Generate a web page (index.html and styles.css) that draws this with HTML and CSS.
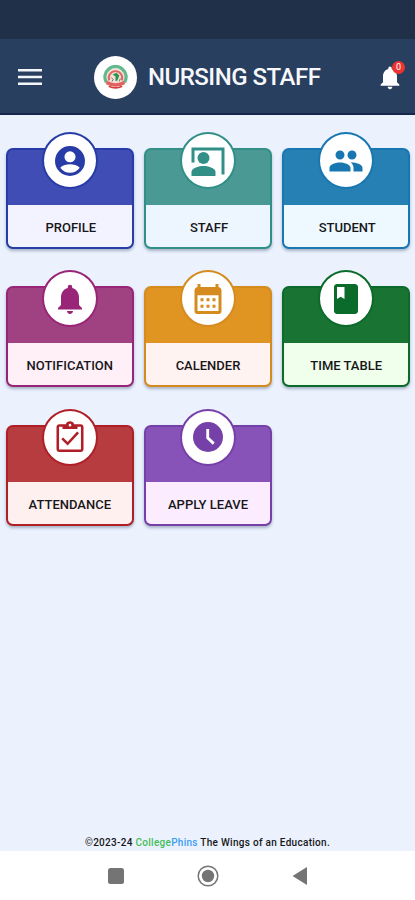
FILE: index.html
```html
<!DOCTYPE html>
<html lang="en">
	<head>
		<meta charset="utf-8">
		<title>Nursing Staff</title>
		<meta name="theme-color" content="#203047">
		<meta name="viewport" content="width=device-width, initial-scale=1">
		<link rel="stylesheet" href="styles.css">
	</head>
	<body>
		<div class="statusbar"></div>
		<header class="topbar">
			<svg class="menu" viewBox="0 0 24 16"><path d="M0 0h24v2.6H0zM0 6.7h24v2.6H0zM0 13.4h24V16H0z"/></svg>
			<div class="logo">
				<svg viewBox="0 0 26 26">
					<circle cx="13" cy="12.5" r="9.5" fill="#f7ded9"/>
					<path d="M3.5 18A11 11 0 1 1 22.5 18" fill="none" stroke="#62b98b" stroke-width="3.4"/>
					<path d="M6.5 16A7 7 0 1 1 19.5 16" fill="none" stroke="#e16763" stroke-width="2"/>
					<path d="M4 16.5q9 5 18 0l1 3.5q-10 5-20 0z" fill="#df625e"/>
					<path d="M6 22q7 3.5 14 0" fill="none" stroke="#d63c3c" stroke-width="1.8"/>
					<path d="M10 10l4-2 3 3-2 5-2 1v-5z" fill="#299650"/>
					<path d="M8.5 13l2 2-1 2M18 14l-1 3" fill="none" stroke="#4b756c"/>
				</svg>
			</div>
			<h1>NURSING STAFF</h1>
			<div class="alerts">
				<svg viewBox="0 0 24 24"><path d="M12 22c1.1 0 2-.9 2-2h-4c0 1.100.9 2 2 2zm6-6v-5c0-3.070-1.640-5.640-4.500-6.320V4a1.500 1.500 0 0 0-3 0v.68C7.630 5.360 6 7.920 6 11v5l-2 2v1h16v-1z"/></svg>
				<span class="badge">0</span>
			</div>
		</header>
		<main class="grid">
			<a class="card profile">
				<span class="icon"><svg viewBox="0 0 24 24"><circle cx="12" cy="12" r="10"/><circle class="cut" cx="12" cy="9.200" r="3.700"/><path class="cut" d="M5.500 16.500C7 14.800 10 14.200 12 14.200s5 .6 6.500 2.300C17 18.600 14.700 19.900 12 19.900s-5-1.300-6.500-3.400z"/></svg></span>
				<span class="label">PROFILE</span>
			</a>
			<a class="card staff">
				<span class="icon"><svg viewBox="0 0 24 24"><path d="M1 13V3h22v18h-2V5H3v8z"/><circle cx="9" cy="10" r="4"/><path d="M1 22v-2.800C1 16.500 6.300 15.300 9 15.300s8 1.200 8 3.900V22z"/></svg></span>
				<span class="label">STAFF</span>
			</a>
			<a class="card student">
				<span class="icon"><svg viewBox="0 0 24 24"><path d="M16 11c1.660 0 2.990-1.340 2.990-3S17.660 5 16 5s-3 1.340-3 3 1.340 3 3 3zm-8 0c1.660 0 2.990-1.340 2.990-3S9.660 5 8 5 5 6.340 5 8s1.340 3 3 3zm0 2c-2.330 0-7 1.170-7 3.500V19h14v-2.500C15 14.170 10.330 13 8 13zm8 0c-.29 0-.62.020-.97.050 1.160.84 1.970 1.970 1.970 3.450V19h6v-2.500c0-2.330-4.670-3.500-7-3.500z"/></svg></span>
				<span class="label">STUDENT</span>
			</a>
			<a class="card notification">
				<span class="icon"><svg viewBox="0 0 24 24"><path d="M12 22c1.100 0 2-.9 2-2h-4c0 1.100.9 2 2 2zm6-6v-5c0-3.070-1.640-5.640-4.500-6.320V4a1.500 1.500 0 0 0-3 0v.68C7.630 5.360 6 7.920 6 11v5l-2 2v1h16v-1z"/></svg></span>
				<span class="label">NOTIFICATION</span>
			</a>
			<a class="card calender">
				<span class="icon"><svg viewBox="0 0 24 24"><path fill-rule="evenodd" d="M5 2h2v2h10V2h2v2a2.300 2.300 0 0 1 2 2v14a2 2 0 0 1-2 2H5a2 2 0 0 1-2-2V6a2.300 2.300 0 0 1 2-2zm0 7.500V20h14V9.500z"/><path d="M7 11.500h2v2H7zM11 11.500h2v2h-2zM15 11.500h2v2h-2zM7 15.800h2v2H7zM11 15.800h2v2h-2zM15 15.800h2v2h-2z"/></svg></span>
				<span class="label">CALENDER</span>
			</a>
			<a class="card timetable">
				<span class="icon"><svg viewBox="0 0 24 24"><path d="M18 2H6c-1.100 0-2 .9-2 2v16c0 1.100.9 2 2 2h12c1.100 0 2-.9 2-2V4c0-1.100-.9-2-2-2zM6 4h5v8l-2.500-1.500L6 12V4z"/></svg></span>
				<span class="label">TIME TABLE</span>
			</a>
			<a class="card attendance">
				<span class="icon"><svg viewBox="0 0 24 24"><path fill-rule="evenodd" d="M5 3.500h4.200a3 3 0 0 1 5.600 0H19a2 2 0 0 1 2 2V20a2 2 0 0 1-2 2H5a2 2 0 0 1-2-2V5.500a2 2 0 0 1 2-2zm-.3 1.700v15.100h14.600V5.200H17v1.500H7V5.200zm7.300-2a.9.9 0 1 0 0 1.800.9.9 0 0 0 0-1.800z"/><path d="M6.800 12.900l3.600 3.600 7-7.600" class="stroke"/></svg></span>
				<span class="label">ATTENDANCE</span>
			</a>
			<a class="card leave">
				<span class="icon"><svg viewBox="0 0 24 24"><circle cx="12" cy="12" r="10"/><path d="M11.800 6.600v6l4 3.800" class="stroke cutline"/></svg></span>
				<span class="label">APPLY LEAVE</span>
			</a>
		</main>
		<footer class="credit">©2023-24 <b class="green">College</b><b class="blue">Phins</b> The Wings of an Education.</footer>
		<nav class="navbar">
			<svg viewBox="0 0 24 24"><rect x="4" y="4" width="16" height="16" rx="2.500"/></svg>
			<svg viewBox="0 0 24 24"><circle cx="12" cy="12" r="9.800" class="ring"/><circle cx="12" cy="12" r="6.200"/></svg>
			<svg viewBox="0 0 24 24"><path d="M4.500 12L19 3v18z"/></svg>
		</nav>
	</body>
</html>
```
FILE: styles.css
```css
html, body {
	margin: 0;
	padding: 0;
	height: 100%;
}
body {
	display: flex;
	flex-direction: column;
	background: #ebf2fe;
	font-family: Roboto, sans-serif;
	color: #171719;
	overflow: hidden;
}
svg {
	display: block;
}
.statusbar {
	height: 39px;
	background: #203048;
}
.topbar {
	display: flex;
	align-items: center;
	box-sizing: border-box;
	height: 76px;
	padding: 2px 11px 0 18px;
	background: #293f60;
	border-bottom: 2px solid #14264b;
}
.menu {
	width: 24px;
	height: 16px;
	fill: #f4f6fa;
}
.logo {
	display: flex;
	align-items: center;
	justify-content: center;
	width: 43px;
	height: 43px;
	margin-left: 52px;
	border-radius: 50%;
	background: #fff;
}
.logo svg {
	width: 25px;
	height: 25px;
}
h1 {
	margin: 0 0 0 11px;
	font-size: 24px;
	font-weight: 500;
	letter-spacing: -.5px;
	color: #f7f8fb;
	white-space: nowrap;
}
.alerts {
	position: relative;
	margin-left: auto;
}
.alerts svg {
	width: 28px;
	height: 31px;
	fill: #fff;
}
.badge {
	position: absolute;
	top: -1px;
	right: -1px;
	width: 13px;
	height: 13px;
	border-radius: 50%;
	background: #ec3530;
	color: #fff;
	font-size: 9px;
	line-height: 13px;
	text-align: center;
}
.grid {
	flex: 1;
	display: grid;
	grid-template-columns: repeat(3, 128px);
	grid-auto-rows: 101px;
	gap: 37.3px 10.2px;
	padding: 33px 0 0 5.8px;
}
.card {
	position: relative;
	display: flex;
	flex-direction: column;
	justify-content: flex-end;
	box-sizing: border-box;
	border: 2px solid var(--edge);
	border-radius: 7px;
	background: var(--main);
	box-shadow: 0 2px 3px rgba(40, 60, 90, .35);
}
.icon {
	position: absolute;
	top: -18px;
	left: 50%;
	display: flex;
	align-items: center;
	justify-content: center;
	box-sizing: border-box;
	width: 56px;
	height: 57px;
	margin-left: -28px;
	border: 2px solid var(--edge);
	border-radius: 50%;
	background: #fff;
}
.icon svg {
	width: 36px;
	height: 36px;
	fill: var(--edge);
}
.icon .cut {
	fill: #fff;
}
.icon .stroke {
	fill: none;
	stroke: var(--edge);
	stroke-width: 1.7;
}
.icon .cutline {
	stroke: #fff;
	stroke-width: 1.9;
}
.label {
	height: 42px;
	border-radius: 0 0 5px 5px;
	background: var(--tint);
	font-size: 13px;
	font-weight: 500;
	line-height: 45px;
	text-align: center;
	white-space: nowrap;
}
.profile .label, .staff .label, .student .label {
	padding-left: 2px;
}
.profile { --main: #3f4db5; --edge: #273ca6; --tint: #f3f3ff; }
.staff { --main: #4b9994; --edge: #318f87; --tint: #edf5fe; }
.student { --main: #2780b4; --edge: #1877b0; --tint: #edf8ff; }
.notification { --main: #a04282; --edge: #982577; --tint: #fff0f8; }
.calender { --main: #e09522; --edge: #d58b1e; --tint: #fff3f1; }
.timetable { --main: #197333; --edge: #0b6b2b; --tint: #efffec; }
.attendance { --main: #b73c3f; --edge: #b01f28; --tint: #fff0f0; }
.leave { --main: #8853b9; --edge: #7640a9; --tint: #fbedff; }
.credit {
	height: 17px;
	font-size: 10px;
	font-weight: 500;
	letter-spacing: .29px;
	line-height: 17px;
	text-align: center;
}
.credit b {
	font-weight: 500;
}
.green {
	color: #43bd58;
}
.blue {
	color: #3c9df0;
}
.navbar {
	display: flex;
	align-items: center;
	justify-content: center;
	gap: 68px;
	height: 49px;
	background: #fff;
}
.navbar svg {
	width: 24px;
	height: 24px;
	fill: #747474;
}
.navbar .ring {
	fill: none;
	stroke: #747474;
	stroke-width: 1.5;
}
```
